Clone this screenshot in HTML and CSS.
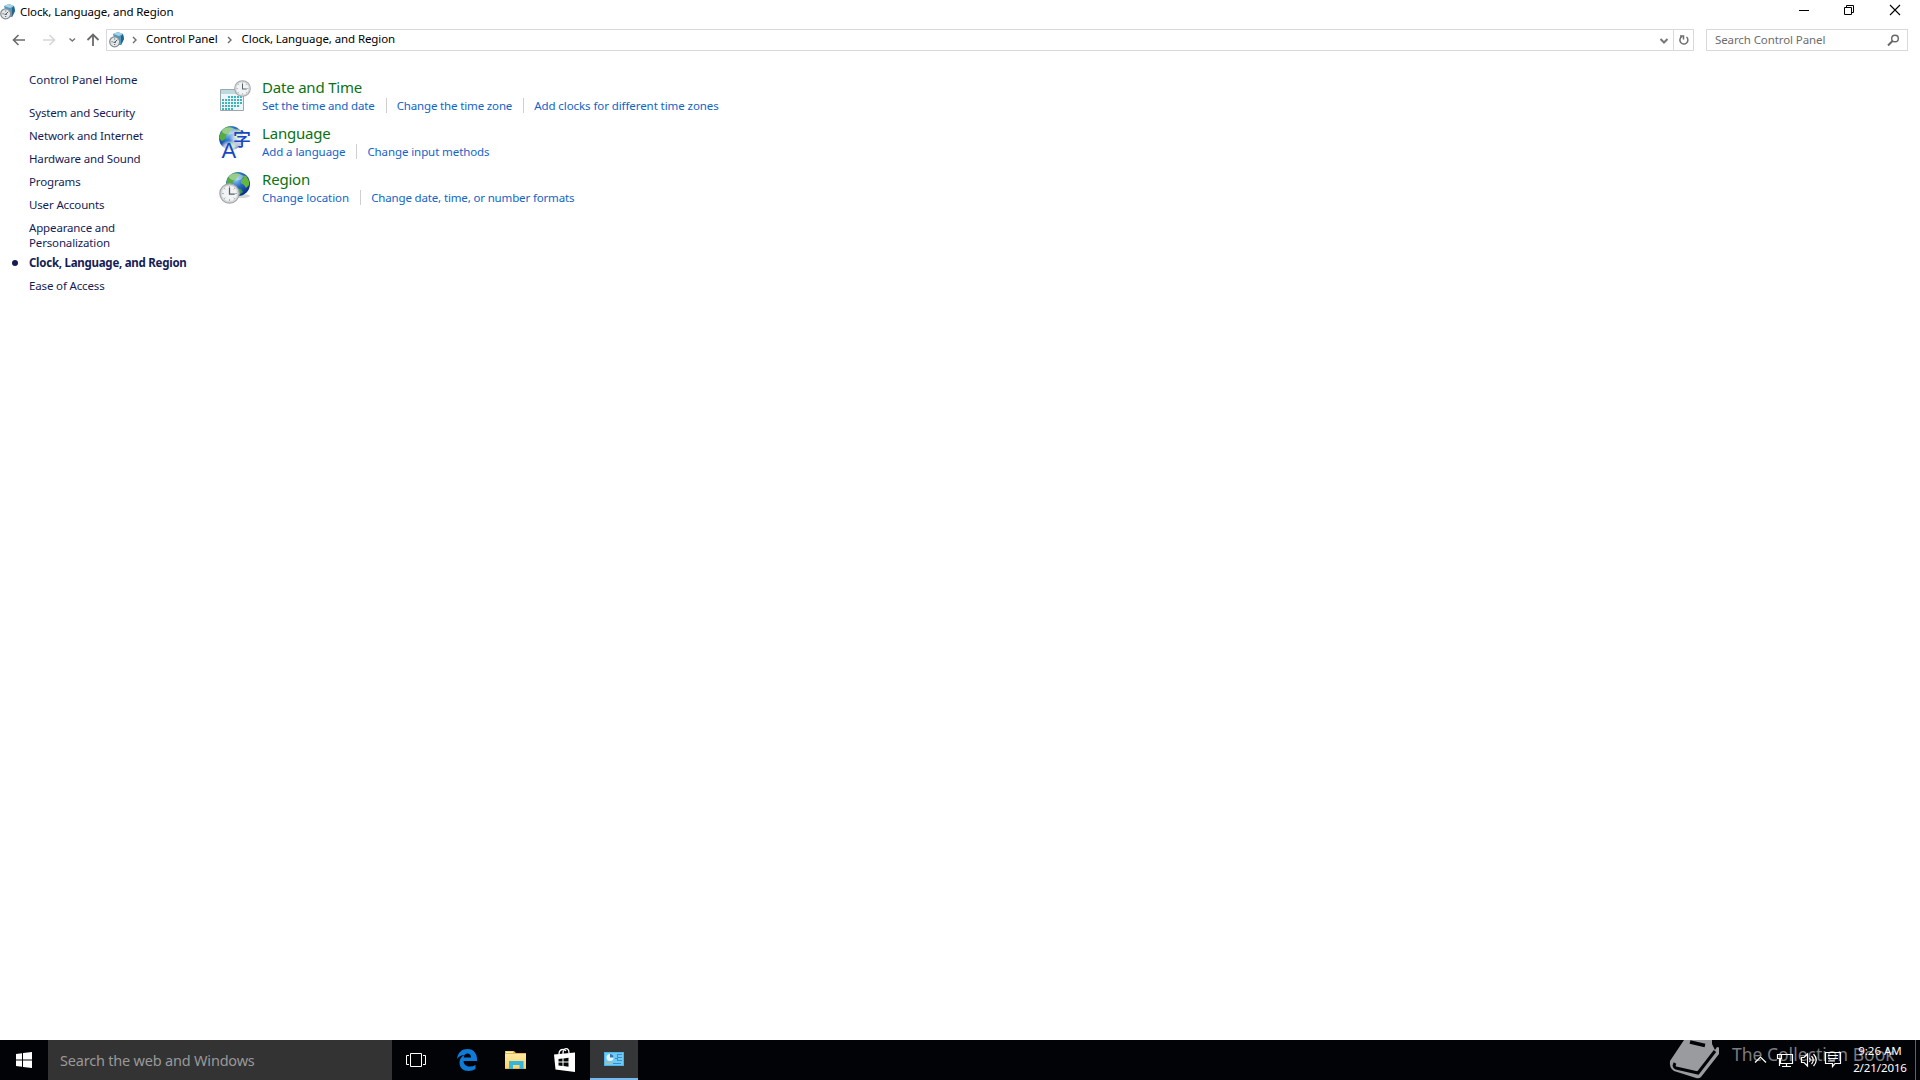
FILE: index.html
```html
<!DOCTYPE html>
<html lang="en">
<head>
    <meta charset="UTF-8">
    <title>Clock, Language, and Region</title>
    <link rel="stylesheet" href="styles.css">
</head>
<body>
    <!-- shared icon shapes -->
    <svg class="defs" width="0" height="0">
        <defs>
            <radialGradient id="sea" cx="40%" cy="30%" r="70%">
                <stop offset="0" stop-color="#8ed0f6"/>
                <stop offset="0.5" stop-color="#2467c4"/>
                <stop offset="1" stop-color="#0c2f86"/>
            </radialGradient>
            <radialGradient id="glow">
                <stop offset="0" stop-color="#fff" stop-opacity="0.9"/>
                <stop offset="0.6" stop-color="#fff" stop-opacity="0.7"/>
                <stop offset="1" stop-color="#fff" stop-opacity="0"/>
            </radialGradient>
            <linearGradient id="folder" x1="0" y1="0" x2="0" y2="1">
                <stop offset="0" stop-color="#ffe9a0"/>
                <stop offset="1" stop-color="#f8d36c"/>
            </linearGradient>
        </defs>
        <symbol id="globe" viewBox="0 0 24 24">
            <circle cx="12" cy="12" r="12" fill="url(#sea)"/>
            <path d="M2 6Q6 0 12 1L14 3L11 5L10 8L7 9L6 13L3 15L0 12Z" fill="#55ad3c"/>
            <path d="M15 3L20 4Q24 9 23 13L20 16L18 13L15 11L15 8L18 6Z" fill="#65b83d"/>
            <path d="M11 16L15 17L17 20L13 23L11 21Z" fill="#3f9a3d"/>
            <ellipse cx="10" cy="5" rx="7" ry="3.5" fill="#fff" opacity="0.4"/>
        </symbol>
        <symbol id="clock" viewBox="0 0 20 20">
            <circle cx="10" cy="10" r="9.2" fill="#d9dcdf" stroke="#a3a7ab" stroke-width="1.2"/>
            <circle cx="10" cy="10" r="7.6" fill="#f1f3f4" stroke="#c3c7cb" stroke-width="0.5"/>
            <path d="M10 3V4.5M10 15.5V17M3 10H4.5M15.5 10H17M5 5L6 6M15 5L14 6M5 15L6 14M15 15L14 14" stroke="#8d9196" stroke-width="0.8"/>
            <path d="M10 4.5V10.5H15" fill="none" stroke="#596067" stroke-width="1.2"/>
        </symbol>
        <symbol id="region-small" viewBox="0 0 16 16">
            <path d="M4 2L9 0L14 2L15 7L12 13L7 13Z" fill="#4a9ac2"/>
            <path d="M4 2L9 0L14 2L10 4Z" fill="#a9d3e5"/>
            <path d="M12 4L14 2L15 7L12 13Z" fill="#25648c"/>
            <circle cx="5.7" cy="9.8" r="5" fill="#e3e7e9" stroke="#858b90" stroke-width="1.2"/>
            <path d="M2.5 9.8H3.7M5.7 6.5V7.5M5.7 13V12M5.2 10.8L8.3 7.7M4.5 10.3H7" stroke="#555c62" stroke-width="1"/>
        </symbol>
    </svg>

    <div class="window">
        <div class="titlebar">
            <svg class="title-icon" width="16" height="16"><use href="#region-small"/></svg>
            <span class="title">Clock, Language, and Region</span>
            <div class="window-buttons">
                <svg width="46" height="20" viewBox="0 0 46 20"><path d="M19 10.5H29" stroke="#000"/></svg>
                <svg width="46" height="20" viewBox="0 0 46 20"><path d="M18.5 7.5H25.5V14.5H18.5ZM20.5 7V5.5H27.5V12.5H26" fill="none" stroke="#000"/></svg>
                <svg width="46" height="20" viewBox="0 0 46 20"><path d="M18 5L28 15M28 5L18 15" stroke="#000" stroke-width="1.1"/></svg>
            </div>
        </div>

        <div class="navbar">
            <svg class="nav-arrows" width="106" height="24" viewBox="0 0 106 24" fill="none">
                <path d="M25 12H14M18.5 7L13.5 12L18.5 17" stroke="#6b6b6b" stroke-width="1.6"/>
                <path d="M43 12H54M49.5 7L54.5 12L49.5 17" stroke="#d6d6d6" stroke-width="1.6"/>
                <path d="M69.5 10.5L72.3 13L75 10.5" stroke="#777" stroke-width="1.5"/>
                <path d="M93 18V7M87.5 12L93 6.5L98.5 12" stroke="#6b6b6b" stroke-width="1.8"/>
            </svg>
            <div class="address">
                <svg class="address-icon" width="16" height="16"><use href="#region-small"/></svg>
                <svg class="chevron" width="6" height="8" viewBox="0 0 6 8"><path d="M1 1L4 4L1 7" fill="none" stroke="#6d6d6d" stroke-width="1.4"/></svg>
                <span class="crumb crumb-root">Control Panel</span>
                <svg class="chevron" width="6" height="8" viewBox="0 0 6 8"><path d="M1 1L4 4L1 7" fill="none" stroke="#6d6d6d" stroke-width="1.4"/></svg>
                <span class="crumb crumb-current">Clock, Language, and Region</span>
                <svg class="dropdown" width="20" height="20" viewBox="0 0 20 20"><path d="M6.5 9L10 12.5L13.5 9" fill="none" stroke="#777" stroke-width="2"/></svg>
                <div class="refresh">
                    <svg width="19" height="20" viewBox="0 0 19 20" fill="none" stroke="#6e6e6e" stroke-width="1.5"><path d="M12.5 7A4 4 0 1 1 8 6.5"/><path d="M6 6H9.5V9.5"/></svg>
                </div>
            </div>
            <div class="search">
                <span>Search Control Panel</span>
                <svg width="14" height="14" viewBox="0 0 14 14" fill="none" stroke="#666"><circle cx="8" cy="5.5" r="3.3" stroke-width="1.4"/><path d="M5.5 8L1 12.5" stroke-width="2"/></svg>
            </div>
        </div>

        <div class="content">
            <div class="sidebar">
                <a class="home">Control Panel Home</a>
                <a>System and Security</a>
                <a>Network and Internet</a>
                <a>Hardware and Sound</a>
                <a>Programs</a>
                <a>User Accounts</a>
                <a>Appearance and<br>Personalization</a>
                <a class="active">Clock, Language, and Region</a>
                <a>Ease of Access</a>
            </div>

            <div class="categories">
                <div class="category">
                    <svg width="32" height="32" viewBox="0 0 32 32">
                        <path d="M1.5 9.5H24.5V30.5H1.5Z" fill="#edf5f6" stroke="#9ba7ab"/>
                        <path d="M2 10H24V14H2Z" fill="#bcd9df"/>
                        <path d="M9 17H23M3 20H23M3 23H23M3 26H20M3 29H14" stroke="#3cb3bf" stroke-width="2" stroke-dasharray="2 1"/>
                        <use href="#clock" x="15" y="0" width="17" height="17"/>
                    </svg>
                    <div>
                        <h2>Date and Time</h2>
                        <div class="tasks"><a>Set the time and date</a><a>Change the time zone</a><a class="last">Add clocks for different time zones</a></div>
                    </div>
                </div>
                <div class="category">
                    <svg class="language-icon" width="32" height="32" viewBox="0 0 32 32">
                        <use href="#globe" x="0" y="0" width="24" height="24"/>
                        <circle cx="22" cy="13" r="12" fill="url(#glow)"/>
                        <circle cx="10" cy="24" r="10" fill="url(#glow)"/>
                        <text class="glyph-zi" x="14" y="20">字</text>
                        <text class="glyph-a" x="2.5" y="31.5">A</text>
                    </svg>
                    <div>
                        <h2>Language</h2>
                        <div class="tasks tasks-language"><a>Add a language</a><a>Change input methods</a></div>
                    </div>
                </div>
                <div class="category">
                    <svg width="32" height="32" viewBox="0 0 32 32">
                        <ellipse cx="21" cy="24" rx="10" ry="2" fill="#999" opacity="0.4"/>
                        <use href="#globe" x="7" y="0" width="24" height="24"/>
                        <use href="#clock" x="0" y="11" width="21" height="21"/>
                    </svg>
                    <div>
                        <h2>Region</h2>
                        <div class="tasks tasks-region"><a>Change location</a><a>Change date, time, or number formats</a></div>
                    </div>
                </div>
            </div>
        </div>
    </div>

    <div class="taskbar">
        <div class="start">
            <svg width="16" height="16" viewBox="0 0 16 16" fill="#fff"><path d="M0 2L6 1.2V7.5H0ZM7 1L16 0V7.5H7ZM0 8.5H6V14.8L0 14ZM7 8.5H16V16L7 15Z"/></svg>
        </div>
        <div class="taskbar-search"><span>Search the web and Windows</span></div>
        <div class="app">
            <svg width="20" height="16" viewBox="0 0 20 16" fill="none" stroke="#fff"><path d="M4.5 1.5H15.5V14.5H4.5ZM3 3.5H.5V12.5H3M17 3.5H19.5V12.5H17"/></svg>
        </div>
        <div class="app app-edge">
            <svg width="20" height="22" viewBox="0 0 20 22"><path d="M0 10C1 3 5 0 10.5 0C17 0 20 5 20 10V12H6.5C6.8 16 9.5 17.5 13 17.5Q16 17.5 18.5 16V20Q15.5 22 11.5 22C6 22 2.5 18.5 2.5 13.5C2.5 10 4.5 7.5 7.5 6Q3 6 0 10ZM6.7 8.5H14C14 6 12.5 4.5 10.5 4.5C8.5 4.5 7 6 6.7 8.5Z" fill="#0f7bd8" fill-rule="evenodd"/></svg>
        </div>
        <div class="app app-explorer">
            <svg width="22" height="18" viewBox="0 0 22 18"><path d="M0 0H9L11 2H21V18H0Z" fill="#e8b84c"/><path d="M0 3H21V17H0Z" fill="url(#folder)"/><path d="M1 0.5H8V2H1Z" fill="#fff0bb"/><path d="M4 10H18.5V18H14.5V14H8V18H4Z" fill="#35b4dc"/></svg>
        </div>
        <div class="app app-store">
            <svg width="22" height="24" viewBox="0 0 22 24"><path d="M5 6Q5 1.5 9 1.5Q11 1.5 12 3M9 6Q9 .7 12 .7Q15 .7 15 5" fill="none" stroke="#fff" stroke-width="1.3"/><path d="M0 6.5L21 4.5V24L1.5 21.5Z" fill="#fff"/><path d="M4.5 11L8.5 10.6V13.5H4.5ZM9.5 10.4L14.500 9.8V13.5H9.5ZM4.5 14.5H8.5V18L4.5 17.5ZM9.5 14.5H14.500V18.700L9.5 18.1Z" fill="#050609"/></svg>
        </div>
        <div class="app app-active">
            <svg width="20" height="14" viewBox="0 0 20 14"><path d="M0 0H20V14H0Z" fill="#4db4ea"/><path d="M1 1H19V13H1Z" fill="#6fc9f5"/><circle cx="6" cy="5.5" r="3.5" fill="#e8f5fb"/><path d="M6 5.5V2A3.5 3.5 0 0 1 9.5 5.5Z" fill="#2a76b9"/><path d="M11 6.5H13M14 2.5H18M14 5.5H18M14 8.5H18M13.5 2V9" stroke="#3a90c8" stroke-width="1"/><path d="M2 11.5H8" stroke="#d8b668"/><path d="M9 11.5H17" stroke="#348fc2"/></svg>
        </div>
        <div class="tray">
            <svg class="tray-icons" width="90" height="24" viewBox="0 0 90 24" fill="none" stroke="#fff" stroke-width="1.2">
                <path d="M1 14.5L6.5 9L12 14.5"/>
                <path d="M28 6.5H38.5V15.5H26.5V11M32.5 16V18.5M28 18.5H37M23.5 6.5H27.5V10.5H23.5ZM25.5 10.5V18"/>
                <path d="M47.5 9.5H50L53.5 6V18L50 14.5H47.5ZM55.5 10Q57 12 55.5 14M57.5 8Q61 12 57.5 16M59.5 6Q65 12 59.5 18"/>
                <path d="M71.5 4.5H86.5V15.5H81L78.5 18.5V15.5H71.5ZM74 7.5H84M74 10.5H84M74 13H81"/>
            </svg>
            <div class="time">
                <span class="hour">9:26 AM</span>
                <span class="date">2/21/2016</span>
            </div>
            <div class="show-desktop"></div>
        </div>
        <div class="watermark">
            <svg width="52" height="40" viewBox="0 0 52 40">
                <path d="M15 0H43L50 7V14L32 37Q30 39 27 38L5 31Q0 28 1 21Z" fill="#9a9b9e"/>
                <path d="M6 23Q4 27 7 28L29 33L46 11" fill="none" stroke="#020307" stroke-width="3"/>
                <path d="M43 0H52V8L48 7L46 10L43 4Z" fill="#020307"/>
                <path d="M21 2L36 5.5" stroke="#020307" stroke-width="3.5"/>
            </svg>
            <span>The Collection Book</span>
        </div>
    </div>
</body>
</html>
```

FILE: styles.css
```css
* {
    box-sizing: border-box;
}

body {
    margin: 0;
    height: 1080px;
    overflow: hidden;
    background: #fff;
    color: #000;
    font-family: "Noto Sans", "Open Sans", sans-serif;
    font-size: 11.5px;
    letter-spacing: -0.1px;
    display: flex;
    flex-direction: column;
    white-space: nowrap;
}

svg {
    display: block;
    flex: none;
}

.defs {
    position: absolute;
}

.window {
    flex: 1;
}

.titlebar {
    display: flex;
    height: 28px;
}

.title-icon {
    margin-top: 4px;
}

.title {
    margin-left: 4px;
    line-height: 24px;
}

.window-buttons {
    display: flex;
    margin-left: auto;
    padding-right: 2px;
}

.navbar {
    display: flex;
    align-items: center;
    height: 24px;
    padding-right: 12px;
}

.address {
    display: flex;
    align-items: center;
    flex: 1;
    height: 22px;
    border: 1px solid #d9d9d9;
}

.address-icon {
    margin: 0 7px 0 2px;
}

.crumb {
    padding-bottom: 3px;
}

.crumb-root {
    margin: 0 9px 0 8px;
}

.crumb-current {
    margin-left: 9px;
}

.dropdown {
    margin: 0 -1px 0 auto;
}

.refresh {
    height: 20px;
    border-left: 1px solid #d9d9d9;
}

.search {
    display: flex;
    align-items: center;
    justify-content: space-between;
    width: 202px;
    height: 22px;
    margin-left: 12px;
    padding: 0 6px 0 8px;
    border: 1px solid #d9d9d9;
    color: #6d6d6d;
}

.search span {
    padding-bottom: 1px;
}

.content {
    display: flex;
}

.sidebar {
    width: 219px;
    padding: 20px 0 0 29px;
    color: #151c55;
    letter-spacing: -0.15px;
}

.sidebar a {
    display: block;
    position: relative;
    margin-bottom: 8px;
    line-height: 15px;
}

.sidebar .home {
    margin-bottom: 18px;
    letter-spacing: 0;
}

.sidebar .active {
    font-weight: bold;
    letter-spacing: -0.26px;
    margin-top: -3px;
}

.active::before {
    content: "";
    position: absolute;
    left: -17px;
    top: 5px;
    width: 6px;
    height: 6px;
    border-radius: 50%;
    background: #151c55;
}

.categories {
    padding-top: 28px;
}

.category {
    display: flex;
    height: 46px;
}

.category > div {
    margin-left: 11px;
}

.language-icon {
    fill: #1746c5;
    letter-spacing: 0;
}

.glyph-zi {
    font: 500 18px "Noto Sans CJK SC", sans-serif;
}

.glyph-a {
    font: 22px "Liberation Sans", sans-serif;
}

h2 {
    margin: -3px 0 0;
    font-size: 15px;
    font-weight: normal;
    letter-spacing: -0.2px;
    line-height: 20px;
    color: #0b7312;
}

.tasks {
    display: flex;
    margin-top: 1px;
    color: #1264c8;
    letter-spacing: -0.15px;
    line-height: 15px;
}

.tasks a + a {
    margin-left: 11px;
    padding-left: 10px;
    border-left: 1px solid #cfcfcf;
}

.tasks .last {
    letter-spacing: -0.08px;
}

.tasks-language {
    letter-spacing: -0.09px;
}

.tasks-region {
    letter-spacing: -0.15px;
}

.tasks-region a:first-child {
    letter-spacing: -0.03px;
}

.taskbar {
    display: flex;
    position: relative;
    height: 40px;
    background: #020307;
}

.start {
    display: flex;
    align-items: center;
    width: 48px;
    padding-left: 16px;
}

.taskbar-search {
    width: 344px;
    padding-left: 12px;
    background: #333;
    color: #999;
    font-size: 14.5px;
    letter-spacing: -0.2px;
    line-height: 41px;
}

.app {
    display: flex;
    align-items: center;
    justify-content: center;
    width: 48px;
    margin-right: 1px;
}

.app:nth-child(3) {
    margin-right: 3px;
}

.app-active {
    background: #353638;
    border-bottom: 2px solid #76b9ed;
}

.tray {
    display: flex;
    position: relative;
    z-index: 1;
    margin-left: auto;
    color: #fff;
}

.tray-icons {
    margin: 8px 9px 0 0;
}

.time {
    display: flex;
    flex-direction: column;
    align-items: center;
    width: 54px;
    margin-right: 8px;
    padding-top: 2px;
    line-height: 17px;
}

.hour {
    letter-spacing: 0;
}

.show-desktop {
    width: 5px;
    border-left: 1px solid #606165;
}

.watermark {
    display: flex;
    position: absolute;
    left: 1669px;
    top: 0;
    color: #7b7c7f;
    font-size: 17.5px;
    letter-spacing: 0;
    line-height: 29px;
}

.watermark span {
    margin-left: 11px;
}
```
